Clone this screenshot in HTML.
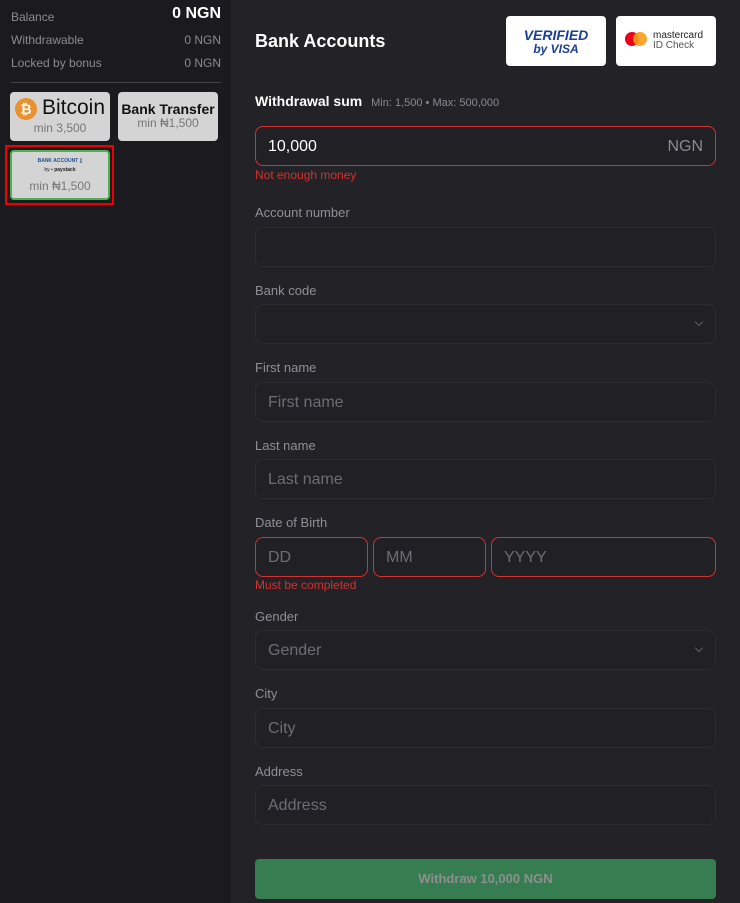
<!DOCTYPE html>
<html><head><meta charset="utf-8"><style>
*{box-sizing:border-box;margin:0;padding:0}
body{width:740px;height:903px;background:#1b1b1f;font-family:"Liberation Sans",sans-serif;position:relative;overflow:hidden}
.left{position:absolute;left:0;top:0;width:231px;height:903px;background:#1b1b1f}
.right{position:absolute;left:231px;top:0;width:509px;height:903px;background:#222227}
.row{position:absolute;left:11px;width:210px;font-size:12px;color:#8a8a90}
.row span{position:absolute;right:0}
.card{position:absolute;background:#d4d4d4;border-radius:4px;text-align:center;color:#777;font-size:12px}
.lbl{position:absolute;left:255px;font-size:13px;color:#8f8f95}
.inp{position:absolute;left:255px;width:461px;height:40px;border:1px solid #2c2c32;border-radius:8px;background:#202025;font-size:16px;color:#6d6d73;padding:11px 0 0 12px}
.err{border-color:#d5322f}
.etxt{position:absolute;left:255px;font-size:12px;color:#d5322f}
.chev{position:absolute;right:13px;top:14px;width:6px;height:6px;border-right:1.5px solid #5e5e64;border-bottom:1.5px solid #5e5e64;transform:rotate(45deg)}
</style></head><body>
<div class="left">
<div class="row" style="top:10px">Balance<span style="color:#fff;font-size:16px;font-weight:bold;top:-5px">0 NGN</span></div>
<div class="row" style="top:33px">Withdrawable<span>0 NGN</span></div>
<div class="row" style="top:56px">Locked by bonus<span>0 NGN</span></div>
<div style="position:absolute;left:11px;top:82px;width:210px;height:1px;background:#444"></div>
<div class="card" style="left:10px;top:92px;width:100px;height:49px">
<div style="position:absolute;left:5px;top:6px;width:22px;height:22px;border-radius:50%;background:#e8912e;color:#fff;font-size:14px;font-weight:bold;line-height:22px">₿</div>
<div style="position:absolute;left:32px;top:4px;font-size:21px;color:#111">Bitcoin</div>
<div style="position:absolute;left:0;right:0;top:29px;font-size:12px">min 3,500</div></div>
<div class="card" style="left:118px;top:92px;width:100px;height:49px">
<div style="position:absolute;left:0;right:0;top:9px;font-size:14px;font-weight:bold;color:#111">Bank Transfer</div>
<div style="position:absolute;left:0;right:0;top:24px;font-size:12px">min ₦1,500</div></div>
<div style="position:absolute;left:5px;top:145px;width:109px;height:60px;border:2px solid #e00;"></div>
<div class="card" style="left:10px;top:150px;width:100px;height:50px;border:2px solid #4caf50">
<div style="position:absolute;left:0;right:0;top:6px;font-size:5px;font-weight:bold;color:#1d4f8c">BANK ACCOUNT ▯</div>
<div style="position:absolute;left:0;right:0;top:15px;font-size:5px;color:#222">by <b>▪ paystack</b></div>
<div style="position:absolute;left:0;right:0;top:27px;font-size:12px">min ₦1,500</div></div>
</div>
<div class="right"></div>
<div style="position:absolute;left:255px;top:31px;font-size:18px;font-weight:bold;color:#fff">Bank Accounts</div>
<div style="position:absolute;left:506px;top:16px;width:100px;height:50px;background:#fff;border-radius:4px;text-align:center;color:#1a3f97;font-style:italic;font-weight:bold;line-height:13px;padding-top:13px;font-size:14px">VERIFIED<br><span style="font-size:12px">by VISA</span></div>
<div style="position:absolute;left:616px;top:16px;width:100px;height:50px;background:#fff;border-radius:4px">
<div style="position:absolute;left:9px;top:16px;width:14px;height:14px;border-radius:50%;background:#eb001b"></div>
<div style="position:absolute;left:17px;top:16px;width:14px;height:14px;border-radius:50%;background:#f79e1b;opacity:.9"></div>
<div style="position:absolute;left:37px;top:15px;font-size:10px;line-height:10px;color:#222">mastercard<br><span style="color:#555">ID Check</span></div></div>
<div style="position:absolute;left:255px;top:93px;font-size:14px;font-weight:bold;color:#fff">Withdrawal sum <span style="font-size:11px;font-weight:normal;color:#8a8a90;margin-left:5px">Min: 1,500 • Max: 500,000</span></div>
<div class="inp err" style="top:126px;color:#fff">10,000<span style="position:absolute;right:12px;color:#8a8a90">NGN</span></div>
<div class="etxt" style="top:168px">Not enough money</div>
<div class="lbl" style="top:205px">Account number</div>
<div class="inp" style="top:227px"></div>
<div class="lbl" style="top:283px">Bank code</div>
<div class="inp" style="top:304px"><div class="chev"></div></div>
<div class="lbl" style="top:360px">First name</div>
<div class="inp" style="top:382px">First name</div>
<div class="lbl" style="top:438px">Last name</div>
<div class="inp" style="top:459px">Last name</div>
<div class="lbl" style="top:515px">Date of Birth</div>
<div class="inp err" style="top:537px;width:113px">DD</div>
<div class="inp err" style="top:537px;left:373px;width:113px">MM</div>
<div class="inp err" style="top:537px;left:491px;width:225px">YYYY</div>
<div class="etxt" style="top:578px">Must be completed</div>
<div class="lbl" style="top:609px">Gender</div>
<div class="inp" style="top:630px">Gender<div class="chev"></div></div>
<div class="lbl" style="top:686px">City</div>
<div class="inp" style="top:708px">City</div>
<div class="lbl" style="top:764px">Address</div>
<div class="inp" style="top:785px">Address</div>
<div style="position:absolute;left:255px;top:859px;width:461px;height:40px;background:#367e51;border-radius:4px;text-align:center;line-height:40px;font-size:13px;font-weight:bold;color:#8f8f8f">Withdraw 10,000 NGN</div>
</body></html>
